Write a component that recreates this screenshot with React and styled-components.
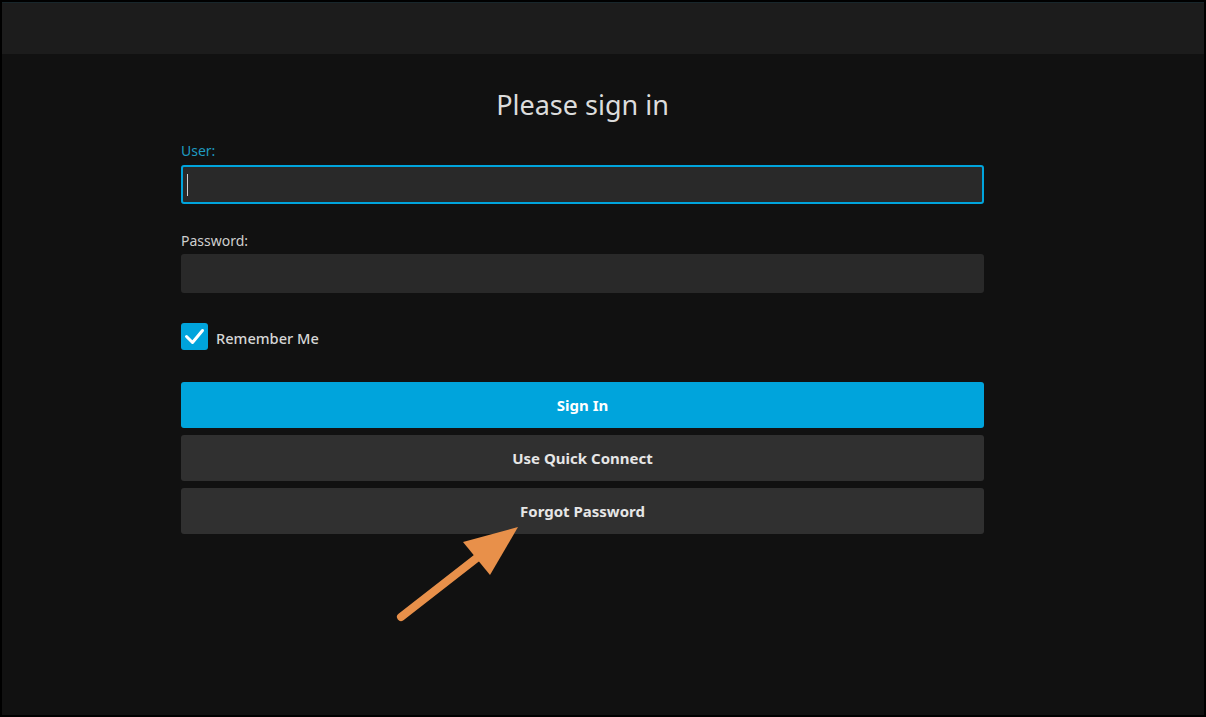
import React from 'react';
import styled, { createGlobalStyle } from 'styled-components';

const GlobalStyle = createGlobalStyle`
  html, body { margin: 0; padding: 0; background: #000; }
  body { font-family: "Noto Sans", "Open Sans", sans-serif; }
  * { box-sizing: border-box; }
`;

// --- layout ---
const Frame = styled.div`
  margin: 2px; height: 713px; background: #111111; position: relative; overflow: hidden;
  display: flex; flex-direction: column;
`;
const Header = styled.div`
  height: 52px; flex-shrink: 0; background: #1c1c1c;
  border-top: 1px solid #18262b;
`;
const Main = styled.div`
  padding: 35px 0 0 179px;
`;
const Form = styled.div`
  width: 803px; display: flex; flex-direction: column;
`;
const Title = styled.h1`
  margin: 0 0 21px; text-align: center; font-size: 27px; line-height: 31px;
  font-weight: 400; color: #dcdcdc;
`;
const Label = styled.label`
  display: block; font-size: 14px; line-height: 20px; margin-bottom: ${p => p.$gap || 4}px;
  color: ${p => (p.$active ? '#1f9ac0' : '#cfcfcf')};
`;
const Field = styled.div`
  height: ${p => p.$h || 39}px; background: #292929; border-radius: 3px;
  border: 2px solid ${p => (p.$focused ? '#00a4dc' : '#292929')};
  display: flex; align-items: center; padding-left: 4px;
  margin-bottom: ${p => p.$mb || 0}px;
`;
const Caret = styled.span`
  width: 1px; height: 22px; background: #cfcfcf;
`;
const CheckRow = styled.label`
  display: flex; align-items: center; gap: 8px; margin-bottom: 32px;
  color: #d6d6d6; font-size: 14.6px; font-weight: 500;
`;
const CheckText = styled.span`
  line-height: 20px; padding-top: 2px;
`;
const CheckBox = styled.span`
  width: 27px; height: 27px; border-radius: 3px; background: #00a4dc;
  display: flex; align-items: center; justify-content: center;
`;
const Buttons = styled.div`
  display: flex; flex-direction: column; gap: 7px;
`;
const Button = styled.button`
  height: 46px; border: none; border-radius: 3px; cursor: pointer;
  font-family: "Noto Sans", sans-serif; font-weight: 700; font-size: 15px;
  background: ${p => (p.$primary ? '#00a4dc' : '#303030')};
  color: ${p => (p.$primary ? '#ffffff' : '#e6e6e6')};
`;
const Arrow = styled.svg`
  position: absolute; left: 0; top: 0; pointer-events: none;
`;

export default function App() {
  return (
    <>
      <GlobalStyle />
      <Frame>
        <Header />
        <Main>
          <Form>
            <Title>Please sign in</Title>
            <Label $active>User:</Label>
            <Field $focused $mb={27}><Caret /></Field>
            <Label $gap={3}>Password:</Label>
            <Field $mb={30} />
            <CheckRow>
              <CheckBox>
                <svg width="27" height="27" viewBox="0 0 27 27">
                  <polyline points="5.5,13.5 11.5,19.5 21.5,7.5" fill="none" stroke="#fff" strokeWidth="3" strokeLinecap="round" strokeLinejoin="round" />
                </svg>
              </CheckBox>
              <CheckText>Remember Me</CheckText>
            </CheckRow>
            <Buttons>
              <Button $primary>Sign In</Button>
              <Button>Use Quick Connect</Button>
              <Button>Forgot Password</Button>
            </Buttons>
          </Form>
        </Main>
        <Arrow width="1202" height="713" viewBox="2 2 1202 713">
          <line x1="401" y1="617" x2="478" y2="557" stroke="#e8904a" strokeWidth="8" strokeLinecap="round" />
          <polygon points="518,527 463,542 490,575" fill="#e8904a" />
        </Arrow>
      </Frame>
    </>
  );
}
